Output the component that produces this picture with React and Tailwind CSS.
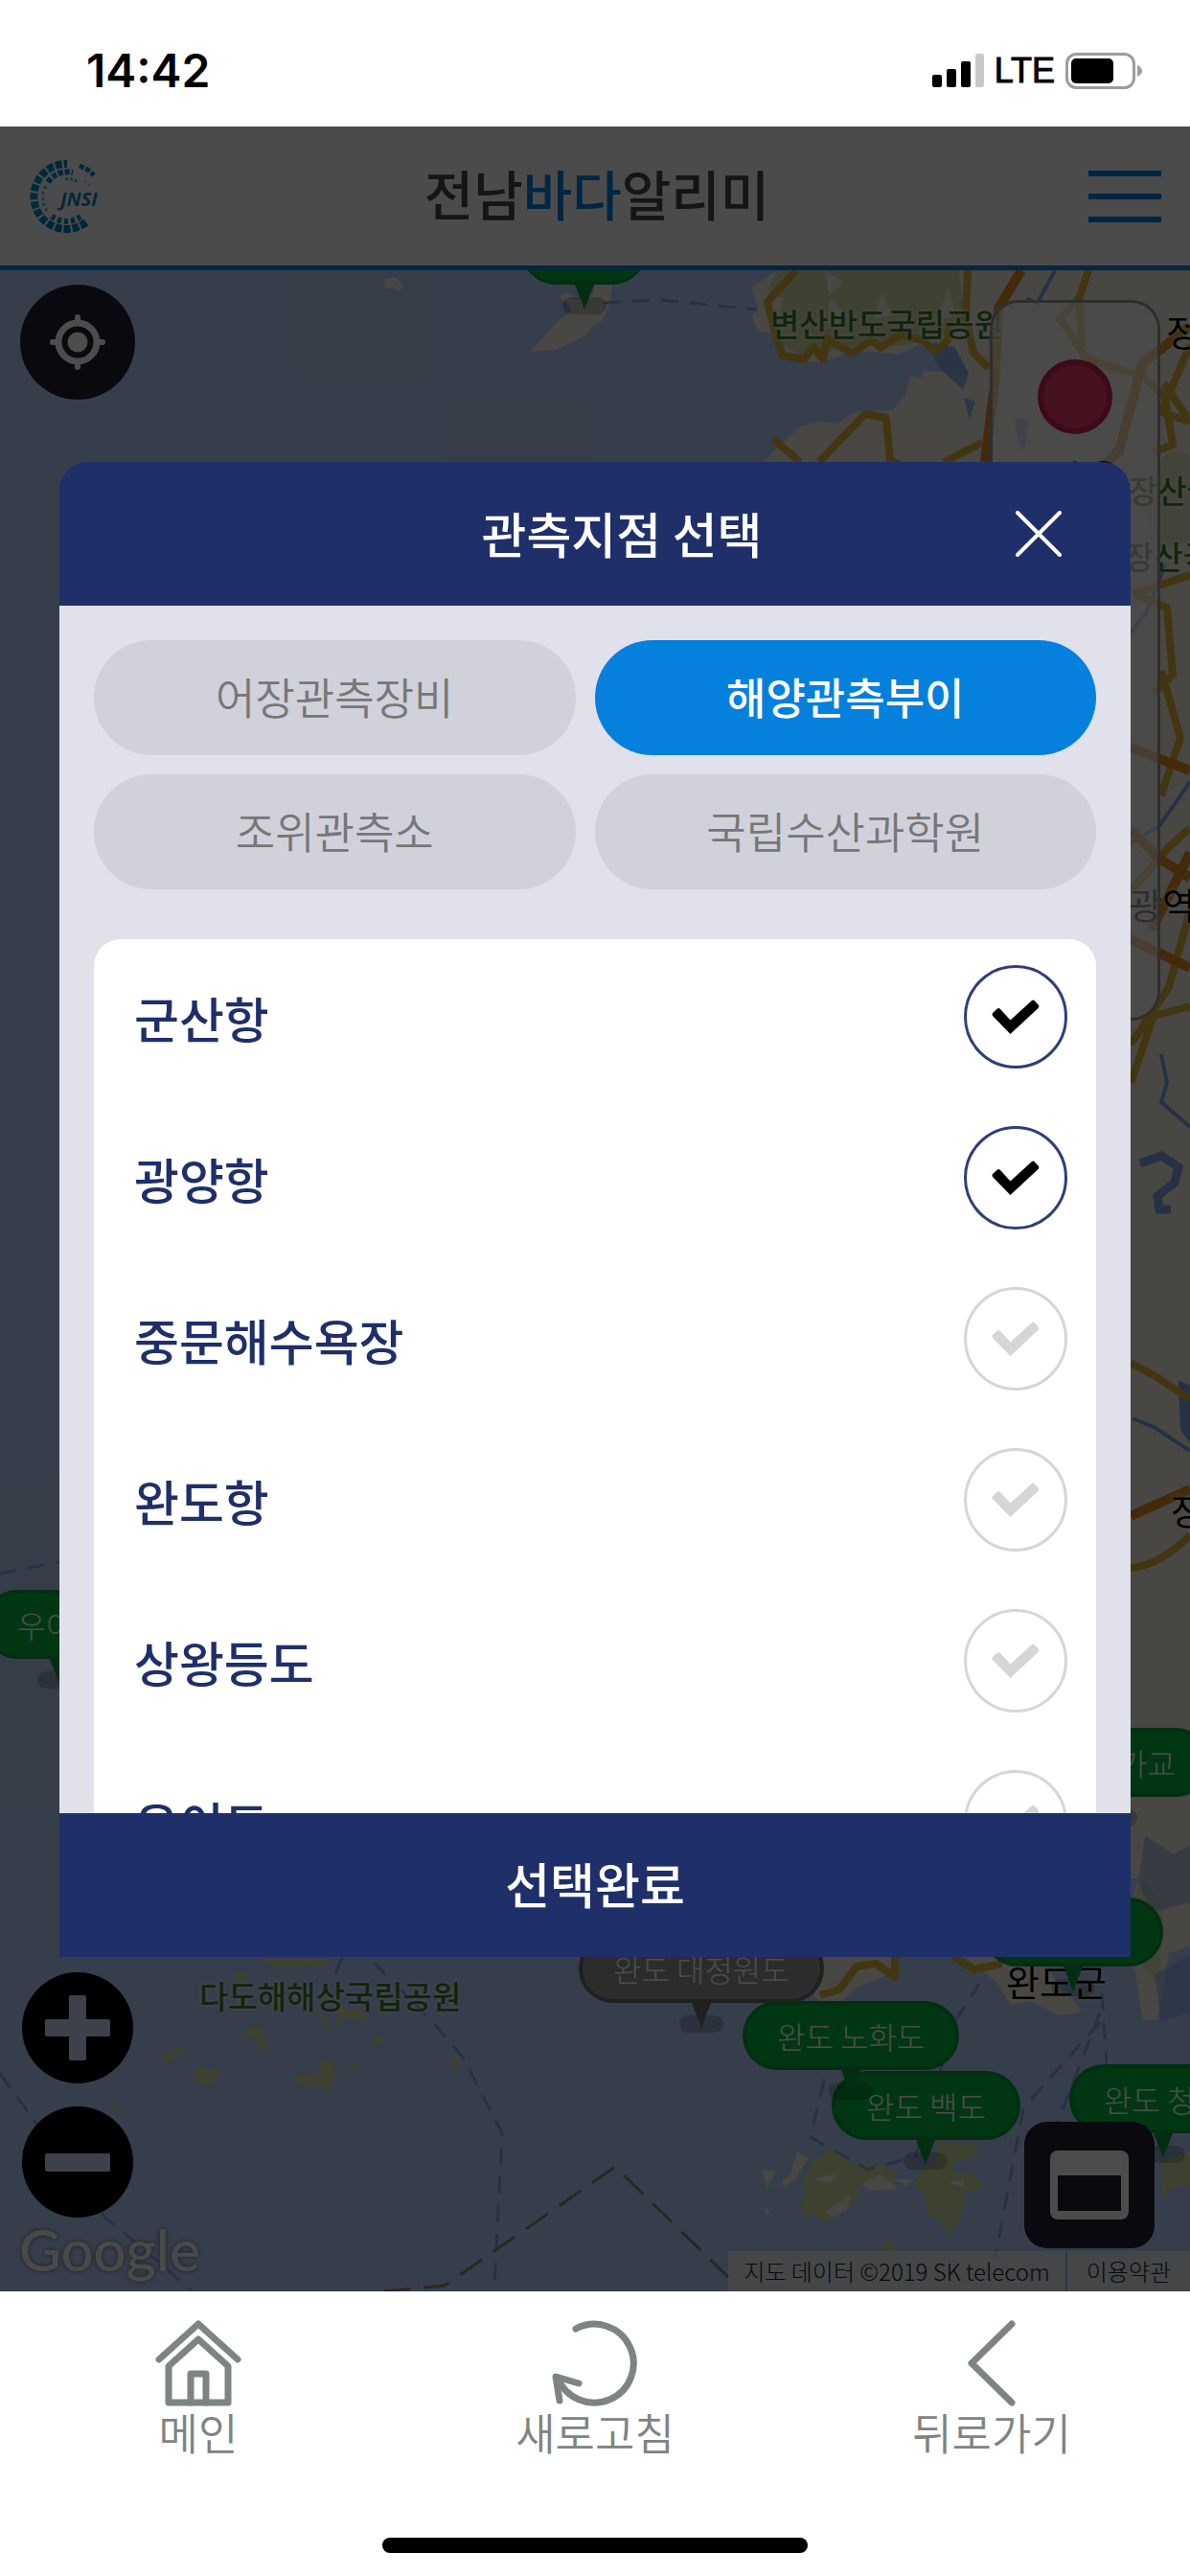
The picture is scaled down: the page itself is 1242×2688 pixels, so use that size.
import React, { useState } from "react";

const TABS = ["어장관측장비", "해양관측부이", "조위관측소", "국립수산과학원"];

const STATIONS = [
  { id: "gunsan", name: "군산항", on: true },
  { id: "gwangyang", name: "광양항", on: true },
  { id: "jungmun", name: "중문해수욕장", on: false },
  { id: "wando", name: "완도항", on: false },
  { id: "sangwang", name: "상왕등도", on: false },
  { id: "ui", name: "우이도", on: false },
];

function StatusBar() {
  return (
    <div className="flex h-[132px] shrink-0 items-center justify-between bg-white pt-4 pr-[50px] pl-[90px] text-black">
      <span className="font-['Inter'] text-[48px] leading-none font-semibold">14:42</span>
      <div className="flex items-center gap-[11px]">
        <svg className="h-[36px] w-[54px]" viewBox="0 0 54 36" aria-label="신호 세기">
          <rect x="0" y="22" width="10" height="13" rx="2" />
          <rect x="15" y="16" width="10" height="19" rx="2" />
          <rect x="30" y="8" width="10" height="27" rx="2" />
          <rect x="45" y="0" width="9" height="35" rx="2" fill="#c9c9c9" />
        </svg>
        <span className="font-['Liberation_Sans'] text-[36px] leading-none [-webkit-text-stroke:1px_#000]">LTE</span>
        <svg className="h-[38px] w-[80px]" viewBox="0 0 80 38" aria-label="배터리">
          <rect x="1.5" y="1.5" width="70" height="35" rx="10" fill="none" stroke="#9d9d9d" strokeWidth="3" />
          <rect x="6" y="6" width="44" height="26" rx="5" />
          <path d="M75 13c4 2 5 4 5 6s-1 4-5 6z" fill="#9d9d9d" />
        </svg>
      </div>
    </div>
  );
}

function Logo() {
  return (
    <svg className="h-[80px] w-[80px]" viewBox="0 0 80 80" role="img" aria-label="JNSI">
      <defs>
        <linearGradient id="ring" x1="0" y1="0" x2="0" y2="1">
          <stop offset="0" stopColor="#0083cc" />
          <stop offset="0.5" stopColor="#009cc0" />
          <stop offset="1" stopColor="#0079c4" />
        </linearGradient>
      </defs>
      <g fill="none" stroke="url(#ring)">
        <path d="M60 67A34 34 0 1 1 40 6" strokeWidth="8" strokeDasharray="7 2" />
        <path d="M53 8A34 34 0 0 1 68 18" strokeWidth="5" strokeDasharray="5 2" />
        <path d="M54 61A25 25 0 0 1 22 59" strokeWidth="6" strokeDasharray="4 3" />
        <path d="M20 25A25 25 0 0 1 46 15" strokeWidth="6" strokeDasharray="5 2" />
        <path d="M19 55A25 25 0 0 1 19 27" strokeWidth="3" strokeDasharray="3 3" opacity="0.6" />
        <path d="M38 22A18 18 0 0 1 50 24" strokeWidth="3" strokeDasharray="3 2" opacity="0.7" />
        <path d="M58 24A25 25 0 0 1 65 30" strokeWidth="2" strokeDasharray="2 3" opacity="0.6" />
      </g>
      <text x="33" y="50" fill="#0089c4" fontFamily="Open Sans, sans-serif" fontSize="20" fontWeight="700" fontStyle="italic">
        JNSI
      </text>
    </svg>
  );
}

function Header() {
  return (
    <header className="flex h-[150px] shrink-0 items-center justify-between border-b-[5px] border-[#007fdc] bg-[#fcfcfc] pr-[30px] pl-[30px]">
      <Logo />
      <h1 className="pb-2 text-[56px] leading-none font-medium text-[#484848]">
        전남<span className="text-[#007fdc]">바다</span>알리미
      </h1>
      <button type="button" aria-label="메뉴" className="flex w-[76px] flex-col gap-[18px]">
        <span className="h-[6px] bg-[#007fdc]" />
        <span className="h-[6px] bg-[#007fdc]" />
        <span className="h-[6px] bg-[#007fdc]" />
      </button>
    </header>
  );
}

/* Drawn terrain: sea, coast, islands and roads. */
function Terrain() {
  return (
    <svg className="absolute inset-0 h-full w-full" viewBox="0 282 1242 2109" preserveAspectRatio="xMidYMid slice" aria-hidden="true">
      <rect x="0" y="282" width="1242" height="2109" fill="#b4cffb" />
      <path d="M295 282h160v130H320l-25-30z M460 410h160v75H460z" fill="#bac8e6" opacity="0.3" />
      <path d="M0 1540h60v350H0z" fill="#bac8e6" opacity="0.4" />

      <g fill="#f1eee0">
        <path d="M811 282L785 300l6 23-6 7 6 15 14 3 10 19 24 11 20-1 31-10h24l24 3 20-10 19-3 20 6 14 27-6 17 12 10 4 26V700h221V282z" />
        <path d="M1011 390l-26-2-21-1-2 7-12-2-4 18-14 18-38 1-20 13-19-2-20 5-20 18-18 19v20h230V440l-8-25z" />
        <path d="M1150 480h92v1480h-62l-30-60z" />
        <path d="M553 367l27-2 30-14 8-10 10-6 8-16 4-26-8-10-10 10-4 16-16-14 6 18-16-2 4 14-12 8z" />
        <path d="M401 291l12-2 8 9-5 7-6-5-8 1zM584 310l8-5 8 5-6 7z" />
        <path d="M856 2041h80l-10 20-30 12-26 22-20-10z M1005 2041h80l40 60-20 2-30-15-20 5-15-25-20-15z" />
        <path d="M1085 2080h30l14 18-10 4z M1175 2000l20-60 47 10v80l-22 8-12 70h-15z" />
        <path d="M795 2264l14 2-8 18z M832 2246l12 6-14 22-12 8-2-6 8-6z M892 2272l32-8 12 20-28 2z" />
        <path d="M797 2303l6 4-2 6zM934 2274h20l-8 8z" />
      </g>

      <path d="M811 282h190l6 60-60 18-60 2-50 10-30-20 10-40-16-8z" fill="#ced89f" opacity="0.85" />
      <path d="M860 282l20 12-14 14zM866 310l18 20-20 14zM920 306l12 22-20 6zM990 300l8 30-20 4z" fill="#f1eee0" />
      <path d="M1190 520l30-50 22 4v90l-30 10z M1170 2000l24-40 20 30-4 80-20-20z" fill="#ced89f" opacity="0.5" />

      <g fill="#d2dba0">
        <path d="M275 2044h66l-4 10-20-4-10 4-26-3zM246 2058l10 1 1 9-12-2zM318 2098l20 6 8 14-6-3-10-16zM354 2096h25v12l-20-3-4 8-6-1z" />
        <path d="M257 2115h17v10l7 10-1 8-8-6-4-12-11 3zM169 2145l12-7 15-2-16 14-10 2zM202 2164l8-9 10 5 9-1-1 9-13 9-12-6z" />
        <path d="M307 2166l12-1 13-1 5-16 10 4 3 12-6 18-12-6-12 2-12-6zM389 2125l10 1 1 6-12 0zM364 2152l11 1-7 6zM472 2152l10-14 1 8-11 14zM115 2194l8 2 6 10-6-4z" />
        <path d="M870 2240l16 14 4 6 12-3 20 4 14 6-4 12-14-10-18 10-8 20-12 8-6 4-12 8-14-10-8 6-4-16 6-12-6-12 8-8-2-6z" />
        <path d="M980 2235l40 2-6 16-18 2-2 10 20 4 12 10-10 10-10-4-2 28-14 18-10-14-12-6-4-24-10-6 10-18 12-4zM925 2335l12 14-16 2zM1210 2258l32-14v36l-20 4-6 12z" />
      </g>
      <path d="M850 2274l24-6-8 10zM862 2308l26-18-4 16-14 8zM990 2278l16-4v8z" fill="#f1eee0" />

      <g fill="#7fa5e6">
        <path d="M975 358l22 5 14 27-6 17-20-19-10-12zM1006 415l12 4-6 18zM1060 436l14 2-6 34-8-20z" opacity="0.8" />
        <path d="M1230 1440l12 6v60l-10-14z" />
        <path d="M1195 1915l30 20 17-10v60l-40 10-14-30z M1205 2060l37-20v60l-30 10z" opacity="0.5" />
      </g>
      <path d="M1190 1214l22-8 18 12-4 16-18 14 2 14h12" fill="none" stroke="#7fa5e6" strokeWidth="9" />
      <g fill="none" stroke="#7fa5e6" strokeWidth="4">
        <path d="M1101 282l-18 34-12-4M1216 590l-20 50-16 20M1212 1100l6 30-6 20 30 26M1182 1480l24 10 36 24M1180 880l30-18 32-46" />
      </g>

      <g fill="none" stroke="#dcb63f" strokeWidth="8" strokeLinejoin="round">
        <path d="M831 282l-30 33 10 40 6 16 22 4 10-13 10 13 4-22 26 16 20-14 10 8 20-14 24 6 14 12 12-12 2-18" />
        <path d="M855 482l48-50 22 4 4 44 24 12M807 458l28 24M985 482l40-20M1010 282l-2 50 8 36 16 16" />
        <path d="M1136 282l-10 30-20 20 28 42 60 20 22 20 8 50-20 8M1126 312l4 50M1242 360l-30 70 30 10M1215 400l27 40" />
        <path d="M1184 620l34 14 6 70-20 20M1242 600l-60 20M1180 1090l40-60 22-80M1180 1130l24-70 38-10M1212 700l20 70-20 60" />
        <path d="M1180 1422l26 14 36 24M1180 1636q30-2 62-34M1180 930l40-46 22-20" />
        <path d="M856 2082l20-6 18-24 20-3 20 14V2041M994 2041l22 14 30-6" />
      </g>
      <g fill="none" stroke="#e08d24" strokeWidth="10" strokeLinejoin="round">
        <path d="M1066 282l-24 40-4 80-10 80M1242 340l-50 40-24 90-20 20" />
        <path d="M1180 780l62 24M1180 866l30 30 32 20M1180 980l62 30M1180 1582l62-28M1202 970l40-80" />
      </g>

      <g fill="none" stroke="#86a3e0" strokeWidth="3" strokeDasharray="18 12">
        <path d="M630 316l60-3 100 10M0 1642q30-6 62-12M350 2060l10-24M390 2048l60 60 34 40 40 78-8 160M0 2164l110 150 60 50 40 36" />
        <path d="M860 2170l-14 60 60 34 50 -14 40-140 26-40M1148 2110l-80 90-30 160M1148 2100l-46 120M1150 2080l6 90" />
      </g>
      <path d="M400 2391l64-6 178-124L761 2377" fill="none" stroke="#8d8878" strokeWidth="3" strokeDasharray="28 14" />
    </svg>
  );
}

function Pin({ label, place, gray }) {
  const body = gray ? "border-[#6b6b6b] bg-[#949494]" : "border-[#0d9c3c] bg-[#00ba3c]";
  const tip = gray ? "border-t-[#6b6b6b]" : "border-t-[#0d9c3c]";
  return (
    <div className={`absolute flex flex-col items-center ${place}`}>
      <div className={`flex h-[72px] w-full items-center justify-center rounded-full border-4 px-8 text-[32px] leading-none font-light whitespace-nowrap text-white ${body}`}>
        {label}
      </div>
      <div className={`relative z-10 h-0 w-0 border-x-[10px] border-t-[26px] border-x-transparent ${tip}`} />
      <div className="-mt-[13px] h-[18px] w-[46px] rounded-full bg-black/20" />
    </div>
  );
}

const park = "absolute text-[33px] leading-none font-medium whitespace-nowrap text-[#3c7a2a] [text-shadow:0_0_4px_#fff]";
const city = "absolute text-[38px] leading-none whitespace-nowrap text-black [text-shadow:0_0_4px_#fff]";

function MapView() {
  return (
    <main className="relative flex-1 overflow-hidden">
      <Terrain />

      <span className={`${park} top-[39px] left-[804px]`}>변산반도국립공원</span>
      <span className={`${park} top-[213px] left-[1178px]`}>장산국립공원</span>
      <span className={`${park} top-[282px] left-[1174px]`}>장산국립공원</span>
      <span className={`${park} bottom-[292px] left-[208px]`}>다도해해상국립공원</span>
      <span className={`${city} top-[44px] left-[1217px]`}>정읍시</span>
      <span className={`${city} top-[642px] left-[1178px]`}>광역시</span>
      <span className={`${city} top-[1274px] left-[1222px]`}>장흥군</span>
      <span className={`${city} bottom-[305px] left-[1050px]`}>완도군</span>

      <Pin place="top-[-57px] left-[544px] w-[131px]" />
      <Pin label="우이도" place="top-[1377px] left-[-18px]" />
      <Pin label="완도 가교" place="top-[1521px] left-[1066px]" />
      <Pin place="top-[1698px] left-[1026px] w-[188px]" />
      <Pin gray label="완도 대정원도" place="top-[1736px] left-[604px]" />
      <Pin label="완도 백도" place="top-[1879px] left-[868px]" />
      <Pin label="완도 노화도" place="top-[1806px] left-[775px]" />
      <Pin label="완도 청산" place="top-[1872px] left-[1116px]" />

      <div className="absolute top-[31px] right-[31px] h-[752px] w-[178px] rounded-[30px] border-[3px] border-[#9a9a9a] bg-white/60 pt-[59px]">
        <div className="mx-auto h-[78px] w-[78px] rounded-full border-[6px] border-[#cc2450] bg-[#ee3c6c]" />
        <p className="mt-6 text-center text-[32px] leading-none text-[#333]">표수온</p>
      </div>

      <button type="button" aria-label="내 위치" className="absolute top-[15px] left-[21px] flex h-[120px] w-[120px] items-center justify-center rounded-full bg-[#202030]">
        <svg className="h-[60px] w-[60px]" viewBox="0 0 60 60" fill="none" stroke="#fff" strokeWidth="6" strokeLinecap="round">
          <circle cx="30" cy="30" r="20" strokeWidth="7" />
          <circle cx="30" cy="30" r="10.5" fill="#fff" stroke="none" />
          <path d="M30 4v6M30 50v6M4 30h6M50 30h6" />
        </svg>
      </button>

      <div className="absolute bottom-[77px] left-[23px] flex flex-col gap-6">
        <button type="button" aria-label="확대" className="flex h-[116px] w-[116px] items-center justify-center rounded-full bg-black">
          <svg className="h-[68px] w-[68px]" viewBox="0 0 68 68" fill="#ccdaf4">
            <path d="M27 0h14q2 0 2 2v23h23q2 0 2 2v14q0 2-2 2H43v23q0 2-2 2H27q-2 0-2-2V43H2q-2 0-2-2V27q0-2 2-2h23V2q0-2 2-2z" />
          </svg>
        </button>
        <button type="button" aria-label="축소" className="flex h-[116px] w-[116px] items-center justify-center rounded-full bg-black">
          <svg className="h-[68px] w-[68px]" viewBox="0 0 68 68" fill="#ccdaf4">
            <rect x="0" y="25" width="68" height="19" rx="2" />
          </svg>
        </button>
      </div>

      <span className="absolute bottom-[14px] left-[20px] font-['Lato'] text-[60px] leading-none font-medium text-[#f4f4f4] [text-shadow:0_0_5px_#666]">
        Google
      </span>

      <div className="absolute right-0 bottom-0 flex h-[42px] items-center bg-[#ededed]/85 text-[24px] leading-none font-light text-[#222]">
        <span className="border-r-2 border-[#9cb8ec] px-4 py-[9px]">지도 데이터 ©2019 SK telecom</span>
        <a href="#terms" className="px-5">이용약관</a>
      </div>

      <button type="button" aria-label="정보 창" className="absolute right-[37px] bottom-[45px] flex h-[132px] w-[136px] items-center justify-center rounded-[24px] bg-[#202030]">
        <svg className="h-[72px] w-[82px]" viewBox="0 0 82 72">
          <rect width="82" height="72" rx="8" fill="#fff" />
          <rect x="8" y="26" width="66" height="37" fill="#202030" />
        </svg>
      </button>
    </main>
  );
}

function Station({ station, onToggle }) {
  return (
    <li>
      <label className="flex h-[108px] items-center justify-between pr-[30px] pl-[42px]">
        <span className="pt-1 text-[51px] leading-none font-medium text-[#1f2f69]">{station.name}</span>
        <span className="grid h-[108px] w-[108px] place-items-center">
          <input
            type="checkbox"
            checked={station.on}
            onChange={onToggle}
            className="peer col-start-1 row-start-1 h-[108px] w-[108px] appearance-none rounded-full border-[3px] border-[#d6d6d6] bg-white checked:border-[#2f3e78]"
          />
          <svg
            className="pointer-events-none col-start-1 row-start-1 h-[36px] w-[50px] text-[#d6d6d6] peer-checked:text-black"
            viewBox="0 0 50 36"
            fill="currentColor"
          >
            <path d="M1 14L6 9.500Q7.500 8.500 9 10L19.500 21.500 42 1Q43.500 0 45 1.500L49 6Q50 7.500 48.500 9L19.500 36 1 17Q0 15.500 1 14Z" />
          </svg>
        </span>
      </label>
    </li>
  );
}

function StationDialog() {
  const [tab, setTab] = useState(1);
  const [stations, setStations] = useState(STATIONS);
  const toggle = (id) =>
    setStations((all) => all.map((s) => (s.id === id ? { ...s, on: !s.on } : s)));

  return (
    <section role="dialog" aria-labelledby="dialog-title" className="flex w-full flex-col overflow-hidden rounded-t-[30px]">
      <div className="flex h-[150px] items-center bg-[#1f2f69] pr-[72px] text-white">
        <h2 id="dialog-title" className="flex-1 pl-[176px] text-center text-[51px] leading-none font-medium">
          관측지점 선택
        </h2>
        <button type="button" aria-label="닫기">
          <svg className="h-[48px] w-[48px]" viewBox="0 0 48 48" stroke="currentColor" strokeWidth="4" strokeLinecap="round">
            <path d="M2 2l44 44M46 2L2 46" />
          </svg>
        </button>
      </div>

      <div className="h-[1260px] overflow-hidden bg-[#e1e1eb] px-9 pt-9">
        <div className="grid grid-cols-[24fr_25fr] gap-5">
          {TABS.map((name, i) => (
            <button
              key={name}
              type="button"
              aria-pressed={tab === i}
              onClick={() => setTab(i)}
              className={`h-[120px] rounded-full pb-[2px] text-[45px] leading-none ${
                tab === i ? "bg-[#0580dc] font-medium text-white" : "bg-[#d1d1db] font-[350] text-[#777]"
              }`}
            >
              {name}
            </button>
          ))}
        </div>
        <ul className="mt-[52px] flex flex-col gap-[60px] rounded-[28px] bg-white py-[27px]">
          {stations.map((s) => (
            <Station key={s.id} station={s} onToggle={() => toggle(s.id)} />
          ))}
        </ul>
      </div>

      <button type="button" className="h-[150px] bg-[#1f2f69] pb-[2px] text-[51px] leading-none font-medium text-white">
        선택완료
      </button>
    </section>
  );
}

function NavItem({ label, children }) {
  return (
    <button type="button" className="flex flex-col items-center text-[#7d8482]">
      <svg className="h-[90px] w-[90px]" viewBox="0 0 90 90" fill="none" stroke="currentColor" strokeWidth="7" strokeLinecap="round" strokeLinejoin="round">
        {children}
      </svg>
      <span className="text-[45px] leading-[54px] font-[350]">{label}</span>
    </button>
  );
}

function BottomNav() {
  return (
    <footer className="flex h-[297px] shrink-0 flex-col items-center justify-between bg-white pt-[30px] pb-6">
      <nav className="grid w-full grid-cols-3">
        <NavItem label="메인">
          <path d="M4 41L45 4l41 37" />
          <path d="M14 48l31-28 31 28v38H14z" />
          <path d="M37 86V56h16v30" />
        </NavItem>
        <NavItem label="새로고침">
          <path d="M25 9A41 41 0 1 1 6 60" />
          <path d="M28 66L4 59l4 25" />
        </NavItem>
        <NavItem label="뒤로가기">
          <path d="M66 4L24 45l42 41" />
        </NavItem>
      </nav>
      <div className="h-[16px] w-[444px] rounded-full bg-black" />
    </footer>
  );
}

export default function App() {
  return (
    <div className="flex min-h-screen flex-col overflow-hidden bg-white font-['Noto_Sans_CJK_KR',sans-serif]">
      <StatusBar />
      <div className="relative flex flex-1 flex-col">
        <Header />
        <MapView />
        <div className="absolute inset-0 z-20 flex items-center bg-black/70 px-[62px]">
          <StationDialog />
        </div>
      </div>
      <BottomNav />
    </div>
  );
}
